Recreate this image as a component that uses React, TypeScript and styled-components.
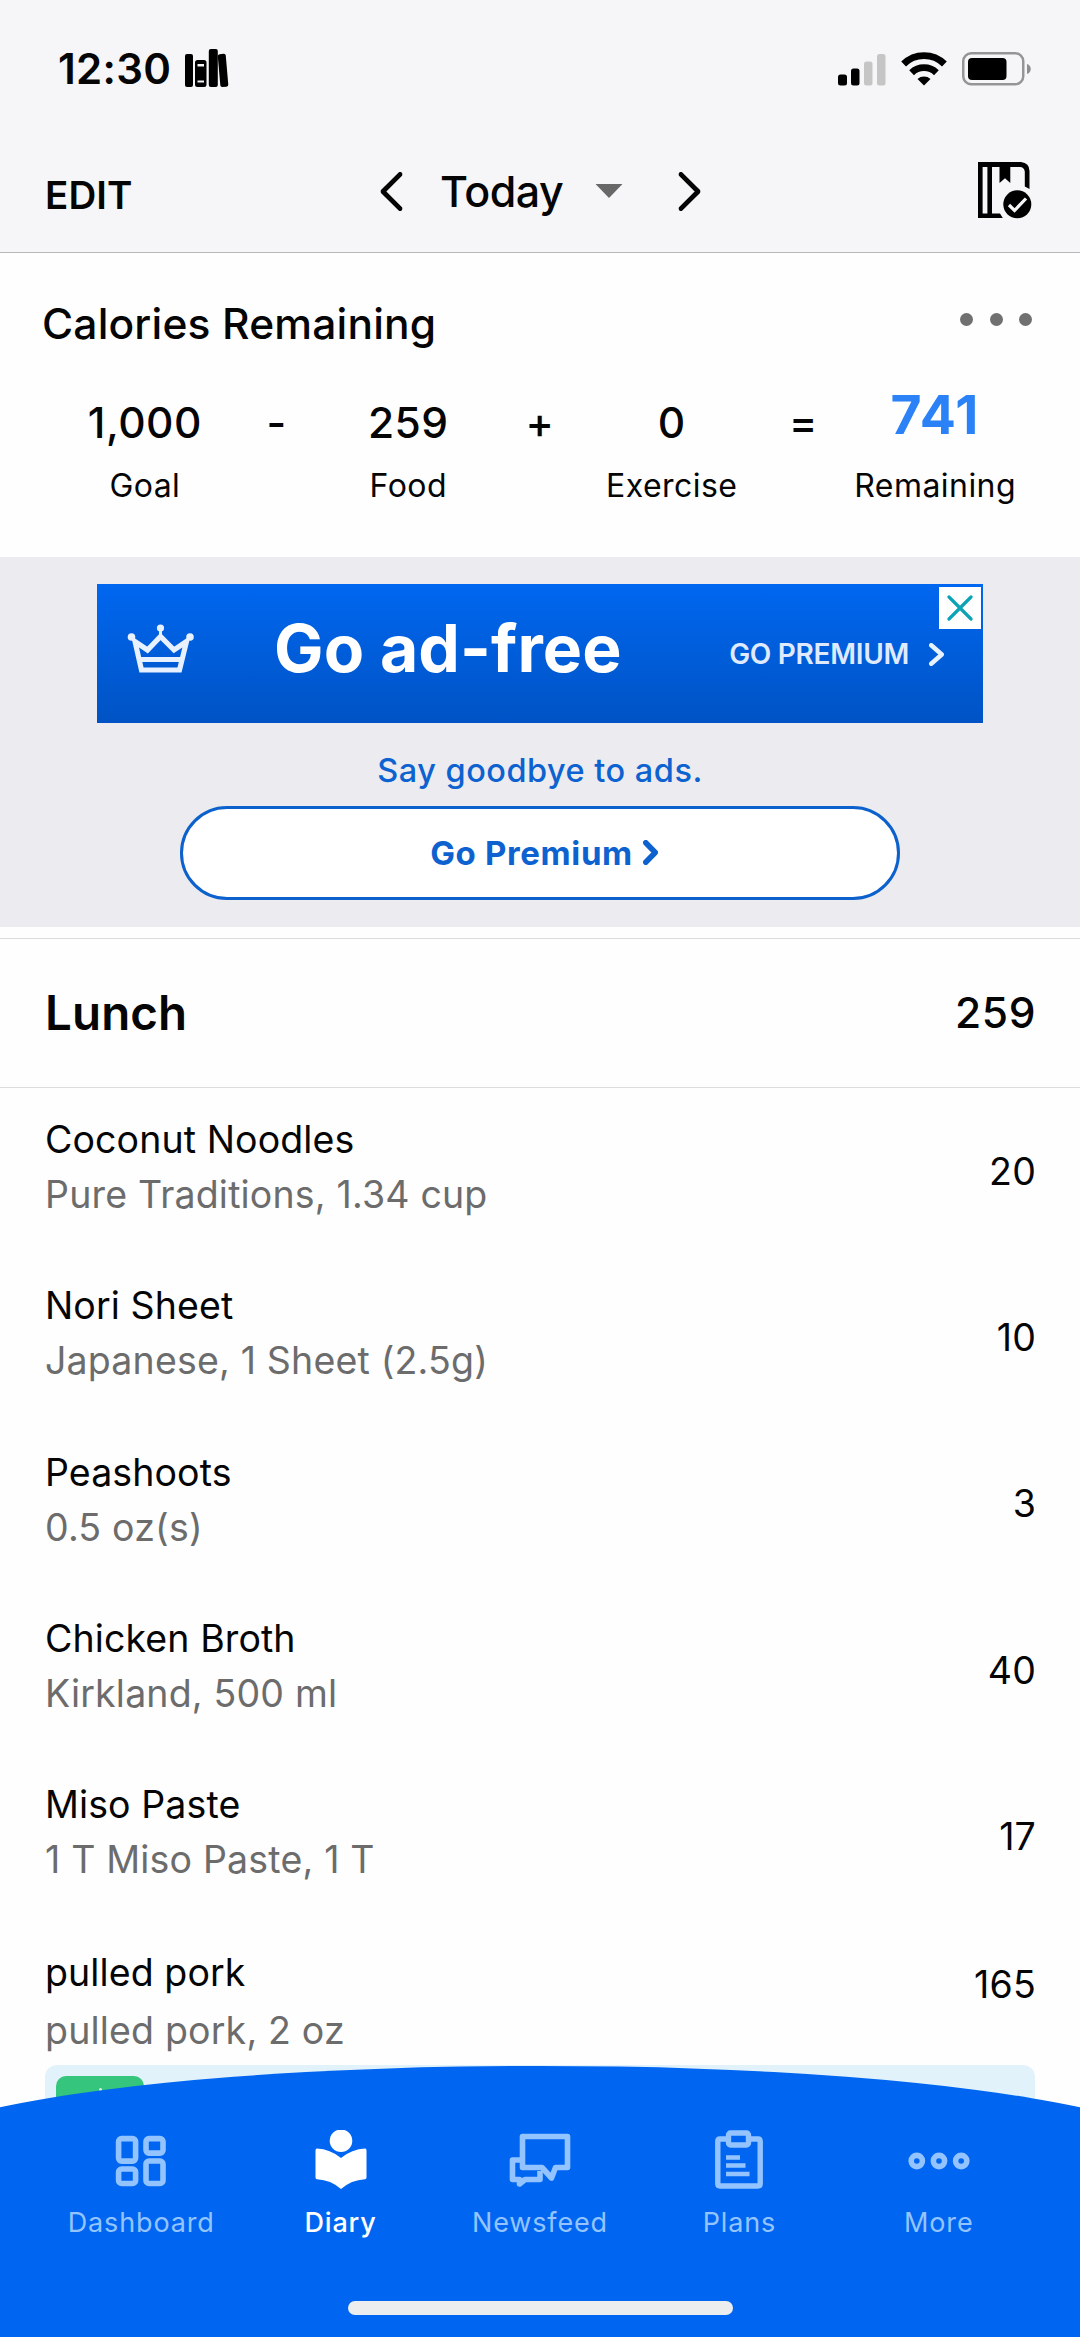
import React from "react";
import styled, { createGlobalStyle } from "styled-components";

const GlobalStyle = createGlobalStyle`
  * { box-sizing: border-box; }
  body {
    margin: 0;
    background: #fefefe;
    font-family: Inter, "Liberation Sans", sans-serif;
    color: #050505;
    -webkit-font-smoothing: antialiased;
  }
`;

type TextProps = { $size: number; $weight?: number; $track?: number; $color?: string };

const Text = styled.span<TextProps>`
  display: block;
  white-space: nowrap;
  font-size: ${(p) => p.$size}px;
  font-weight: ${(p) => p.$weight ?? 400};
  letter-spacing: ${(p) => p.$track ?? 0}px;
  color: ${(p) => p.$color ?? "inherit"};
  line-height: 1.2;
`;

const Screen = styled.main`
  position: relative;
  width: 1080px;
  height: 2337px;
  overflow: hidden;
  background: #fefefe;
`;

const Header = styled.header`
  height: 253px;
  background: #f6f6f8;
  border-bottom: 1px solid #b8b8bb;
`;

const StatusBar = styled.div`
  height: 138px;
  padding: 0 48px 0 58px;
  display: flex;
  align-items: center;
  justify-content: space-between;
`;

const StatusGroup = styled.div<{ $gap: number }>`
  display: flex;
  align-items: center;
  gap: ${(p) => p.$gap}px;
`;

const Toolbar = styled.div`
  height: 114px;
  padding: 0 48px 8px 45px;
  display: grid;
  grid-template-columns: 1fr auto 1fr;
  align-items: center;
`;

const EditButton = styled.div`
  padding-top: 8px;
`;

const DatePicker = styled.div`
  display: flex;
  align-items: center;
  width: 320px;
  transform: translateX(1.5px);
`;

const DateLabel = styled.div`
  margin: 2px 32px 0 38px;
`;

const Caret = styled.svg`
  margin-right: auto;
`;

const ToolbarEnd = styled.div`
  display: flex;
  justify-content: flex-end;
  padding-bottom: 2px;
`;

const Summary = styled.section`
  height: 304px;
  padding-top: 45px;
`;

const SummaryTitle = styled.div`
  height: 50px;
  padding: 0 48px 0 42px;
  display: flex;
  align-items: center;
  justify-content: space-between;
`;

const Dots = styled.div`
  display: flex;
  gap: 16.5px;
  padding-bottom: 8px;
`;

const Dot = styled.i`
  width: 13px;
  height: 13px;
  border-radius: 50%;
  background: #707070;
`;

const Equation = styled.div`
  margin-top: 38px;
  padding: 0 79px;
  display: grid;
  grid-template-columns: repeat(7, minmax(0, 1fr));
`;

const Term = styled.div`
  display: flex;
  flex-direction: column;
  align-items: center;
`;

const TermValue = styled.div<{ $lift?: number }>`
  height: 72px;
  display: flex;
  align-items: center;
  padding-bottom: ${(p) => p.$lift ?? 0}px;
`;

const TermLabel = styled.div`
  height: 56px;
  display: flex;
  align-items: center;
`;

const AdPanel = styled.section`
  height: 370px;
  padding-top: 27px;
  background: #ebebf0;
  display: flex;
  flex-direction: column;
  align-items: center;
`;

const Banner = styled.div`
  position: relative;
  width: 886px;
  height: 139px;
  padding: 0 39px 0 30px;
  display: flex;
  align-items: center;
  background: linear-gradient(#0067f0, #0053c4);
`;

const BannerIcon = styled.div`
  display: flex;
  padding-bottom: 9px;
`;

const BannerTitle = styled.div`
  margin: 0 auto 9px 79px;
`;

const BannerAction = styled.div`
  display: flex;
  align-items: center;
  gap: 20px;
  padding-top: 3px;
`;

const CloseBadge = styled.div`
  position: absolute;
  top: 3px;
  right: 2px;
  width: 42px;
  height: 42px;
  display: flex;
  align-items: center;
  justify-content: center;
  background: #fff;
`;

const AdNote = styled.div`
  height: 83px;
  padding-top: 11px;
  display: flex;
  align-items: center;
`;

const PremiumButton = styled.div`
  width: 720px;
  height: 94px;
  display: flex;
  align-items: center;
  justify-content: center;
  gap: 10px;
  padding: 1px 0 0 8px;
  border: 3px solid #0d61cc;
  border-radius: 47px;
  background: #fff;
`;

const MealHeader = styled.div`
  margin-top: 11px;
  height: 150px;
  padding: 0 44px 2px 45px;
  display: flex;
  align-items: center;
  justify-content: space-between;
  border-top: 1px solid #dcdcdc;
  border-bottom: 1px solid #dcdcdc;
`;

const FoodRow = styled.div<{ $height?: number }>`
  height: ${(p) => p.$height ?? 166.3}px;
  padding: 0 44px 0 45px;
  display: flex;
  align-items: center;
  justify-content: space-between;
`;

const FoodText = styled.div<{ $gap: number; $drop: number; $lift: number }>`
  display: flex;
  flex-direction: column;
  gap: ${(p) => p.$gap}px;
  padding-top: ${(p) => p.$drop}px;
  padding-bottom: ${(p) => p.$lift}px;
`;

const Insight = styled.div`
  margin: 15px 45px 0;
  height: 120px;
  padding: 11px;
  border-radius: 12px;
  background: #e2f2fb;
`;

const InsightBadge = styled.div`
  width: 88px;
  height: 60px;
  padding: 12px 0 0 43px;
  border-radius: 10px;
  background: #35c57d;
`;

const InsightMark = styled.i`
  display: block;
  width: 3px;
  height: 3px;
  border-radius: 50%;
  background: #d8f5e6;
`;

const TabBar = styled.nav`
  position: absolute;
  left: 0;
  right: 0;
  bottom: 0;
  height: 272px;
`;

const TabCurve = styled.svg`
  position: absolute;
  inset: 0;
`;

const Tabs = styled.div`
  position: relative;
  height: 272px;
  padding: 65px 41.5px 0;
  display: grid;
  grid-template-columns: repeat(5, minmax(0, 1fr));
`;

const Tab = styled.div<{ $active?: boolean }>`
  height: 116px;
  display: flex;
  flex-direction: column;
  align-items: center;
  gap: 17px;
  color: ${(p) => (p.$active ? "#ffffff" : "#93c4ff")};
`;

const HomeIndicator = styled.div`
  position: absolute;
  left: 348px;
  bottom: 22px;
  width: 385px;
  height: 14px;
  border-radius: 7px;
  background: #ebedef;
`;

const Chevron = ({ w, h, stroke, flip }: { w: number; h: number; stroke: number; flip?: boolean }) => {
  const m = stroke / 2;
  const d = flip ? `M${w - m} ${m}L${m} ${h / 2}L${w - m} ${h - m}` : `M${m} ${m}L${w - m} ${h / 2}L${m} ${h - m}`;
  return (
    <svg width={w} height={h} viewBox={`0 0 ${w} ${h}`} fill="none" stroke="currentColor" strokeWidth={stroke} strokeLinecap="round" strokeLinejoin="round">
      <path d={d} />
    </svg>
  );
};

const BooksIcon = () => (
  <svg width="44" height="39" viewBox="0 0 44 39">
    <rect x="0" y="5" width="8" height="33" rx="2" />
    <path fillRule="evenodd" d="M12.500 11h6.500a2.500 2.500 0 0 1 2.500 2.500v22a2.500 2.500 0 0 1-2.500 2.500h-6.500a2.500 2.500 0 0 1-2.500-2.500v-22a2.500 2.500 0 0 1 2.500-2.500zM12.500 15v2.500h6.500V15zM12.500 31.500v2h6.500v-2z" />
    <rect x="23.800" y="0" width="9" height="38" rx="2" />
    <rect x="34" y="5" width="8" height="33" rx="2" transform="rotate(-5 37 21)" />
  </svg>
);

const SignalIcon = () => (
  <svg width="48" height="33" viewBox="0 0 48 33">
    <rect x="0" y="21.500" width="9" height="11" rx="2.500" />
    <rect x="13" y="15.500" width="8.500" height="17" rx="2.500" />
    <rect x="26" y="8.500" width="8.500" height="24" rx="2.500" fill="#c5c5c6" />
    <rect x="39" y="1" width="8.500" height="31.500" rx="2.500" fill="#c5c5c6" />
  </svg>
);

const WifiIcon = () => (
  <svg width="46" height="34" viewBox="0 0 46 34">
    <g fill="none" stroke="#000" strokeWidth="6.800">
      <path d="M2.600 12a29 29 0 0 1 40.800 0" />
      <path d="M10.600 20.700a17.800 17.800 0 0 1 24.800 0" />
    </g>
    <path d="M16.500 27a9.800 9.800 0 0 1 13 0L23 33.500z" />
  </svg>
);

const BatteryIcon = () => (
  <svg width="70" height="34" viewBox="0 0 70 34">
    <rect x="1.250" y="1.250" width="60" height="31" rx="8" fill="none" stroke="#959597" strokeWidth="2.500" />
    <rect x="6" y="6" width="38.500" height="22" rx="4" />
    <path d="M65 12c5 1.500 5 8.500 0 10z" fill="#8e8e90" />
  </svg>
);

const DiaryCompleteIcon = () => (
  <svg width="54" height="57" viewBox="0 0 54 57">
    <path d="M0 0H43Q51.500 1 51.500 9V27L46.800 24.500V9.500Q46 5 42 5H32.300V21L27 16.300L21.500 21V5H14V51.500H22L24.800 56H0ZM4.600 5V51.500H9.400V5Z" fillRule="evenodd" />
    <circle cx="39.300" cy="42.300" r="14" />
    <path d="M31 43L36.500 48.500L48 36.500" fill="none" stroke="#f6f6f8" strokeWidth="3.200" />
  </svg>
);

const CrownIcon = () => (
  <svg width="68" height="50" viewBox="0 0 68 50" fill="none" stroke="#e8f1ff">
    <path d="M8 17.500L14.500 46H52.500L59.500 17.500L47 26L33.500 12.500L20.500 26Z" strokeWidth="5.200" strokeLinejoin="miter" />
    <path d="M12 35.500H55" strokeWidth="5" />
    <path d="M33.500 4V12" strokeWidth="3" />
    <g fill="#e8f1ff" stroke="none">
      <circle cx="33.500" cy="4" r="3.600" />
      <circle cx="4.500" cy="13" r="3.800" />
      <circle cx="63" cy="13" r="3.800" />
    </g>
  </svg>
);

const DashboardIcon = () => (
  <svg width="52" height="60" viewBox="0 0 52 60" fill="none" stroke="currentColor" strokeWidth="5.600">
    <rect x="3.600" y="8.600" width="17" height="22.500" rx="3" />
    <rect x="31" y="8.600" width="17" height="14.500" rx="3" />
    <rect x="3.600" y="39" width="17" height="14.500" rx="3" />
    <rect x="31" y="31" width="17" height="22.500" rx="3" />
  </svg>
);

const DiaryIcon = () => (
  <svg width="52" height="60" viewBox="0 0 52 60" fill="currentColor">
    <circle cx="26" cy="10.800" r="11.300" />
    <path d="M2 18.500Q15 19 26 28Q37 19 50 18.500Q51.500 18.500 51.500 20.500V47.500Q51.500 49 50 49.200Q36 50 26 59Q16 50 2 49.200Q.5 49 .5 47.500V20.500Q.5 18.500 2 18.500Z" />
  </svg>
);

const NewsfeedIcon = () => (
  <svg width="62" height="60" viewBox="0 0 62 60" fill="none" stroke="currentColor" strokeWidth="5.600" strokeLinejoin="round">
    <path d="M13.500 6.500H58.500V37.500H46.500L42.500 48L33 37.500H13.500Z" />
    <path d="M12 30H3.500V49.500H10.500V54L16 49.500H31V41" />
  </svg>
);

const PlansIcon = () => (
  <svg width="50" height="60" viewBox="0 0 50 60" fill="none" stroke="currentColor" strokeWidth="5.400">
    <path d="M12 9H6Q3.800 9 3.800 11.500V53.500Q3.800 56 6 56H44Q46.200 56 46.200 53.500V11.500Q46.200 9 44 9H37" />
    <rect x="14.500" y="3" width="20" height="12" rx="2" />
    <path d="M12 27.500H26M12 35.500H31.500M12 44H35.500" strokeWidth="4.400" />
  </svg>
);

const MoreIcon = () => (
  <svg width="62" height="60" viewBox="0 0 62 60" fill="none" stroke="currentColor" strokeWidth="5.600">
    <circle cx="8.800" cy="31" r="5.600" />
    <circle cx="31" cy="31" r="5.600" />
    <circle cx="53.200" cy="31" r="5.600" />
  </svg>
);

const foods = [
  { name: "Coconut Noodles", detail: "Pure Traditions, 1.34 cup", kcal: "20" },
  { name: "Nori Sheet", detail: "Japanese, 1 Sheet (2.5g)", kcal: "10" },
  { name: "Peashoots", detail: "0.5 oz(s)", kcal: "3" },
  { name: "Chicken Broth", detail: "Kirkland, 500 ml", kcal: "40" },
  { name: "Miso Paste", detail: "1 T Miso Paste, 1 T", kcal: "17" },
  { name: "pulled pork", detail: "pulled pork, 2 oz", kcal: "165", height: 131, gap: 13, drop: 34, lift: 0 },
];

const terms = [
  { value: "1,000", label: "Goal" },
  { value: "-" },
  { value: "259", label: "Food" },
  { value: "+" },
  { value: "0", label: "Exercise" },
  { value: "=" },
  { value: "741", label: "Remaining", highlight: true },
];

const tabs = [
  { label: "Dashboard", icon: <DashboardIcon /> },
  { label: "Diary", icon: <DiaryIcon />, active: true },
  { label: "Newsfeed", icon: <NewsfeedIcon /> },
  { label: "Plans", icon: <PlansIcon /> },
  { label: "More", icon: <MoreIcon /> },
];

export default function App() {
  return (
    <Screen>
      <GlobalStyle />
      <Header>
        <StatusBar>
          <StatusGroup $gap={14}>
            <Text $size={42} $weight={600} $track={0.3}>12:30</Text>
            <BooksIcon />
          </StatusGroup>
          <StatusGroup $gap={15}>
            <SignalIcon />
            <WifiIcon />
            <BatteryIcon />
          </StatusGroup>
        </StatusBar>
        <Toolbar>
          <EditButton>
            <Text $size={38.5} $weight={600} $track={0.1}>EDIT</Text>
          </EditButton>
          <DatePicker>
            <Chevron w={22} h={39} stroke={4.8} flip />
            <DateLabel><Text $size={43} $weight={500} $track={-0.5}>Today</Text></DateLabel>
            <Caret width="27" height="14" viewBox="0 0 27 14"><path d="M0 0H27L13.500 14Z" fill="#686868" /></Caret>
            <Chevron w={22} h={39} stroke={4.8} />
          </DatePicker>
          <ToolbarEnd><DiaryCompleteIcon /></ToolbarEnd>
        </Toolbar>
      </Header>

      <Summary>
        <SummaryTitle>
          <Text $size={42.5} $weight={500} $track={0.17}>Calories Remaining</Text>
          <Dots><Dot /><Dot /><Dot /></Dots>
        </SummaryTitle>
        <Equation>
          {terms.map((t) => (
            <Term key={t.value}>
              <TermValue $lift={t.highlight ? 13 : 0}>
                {t.highlight
                  ? <Text $size={53.5} $weight={700} $track={1.4} $color="#2a82f6">{t.value}</Text>
                  : <Text $size={42.5} $weight={500} $track={0.5}>{t.value}</Text>}
              </TermValue>
              <TermLabel>{t.label && <Text $size={32} $track={0.45}>{t.label}</Text>}</TermLabel>
            </Term>
          ))}
        </Equation>
      </Summary>

      <AdPanel>
        <Banner>
          <BannerIcon><CrownIcon /></BannerIcon>
          <BannerTitle><Text $size={66} $weight={700} $track={0.1} $color="#fff">Go ad-free</Text></BannerTitle>
          <BannerAction>
            <Text $size={28} $weight={600} $track={-0.3} $color="#dfeaff">GO PREMIUM</Text>
            <Text as="div" $size={10} $color="#e8f1ff"><Chevron w={15} h={23} stroke={4.5} /></Text>
          </BannerAction>
          <CloseBadge>
            <svg width="26" height="26" viewBox="0 0 26 26" stroke="#0ca3b6" strokeWidth="3.200" strokeLinecap="round"><path d="M2 2L24 24M24 2L2 24" /></svg>
          </CloseBadge>
        </Banner>
        <AdNote><Text $size={32.5} $weight={500} $track={0.5} $color="#0d62d0">Say goodbye to ads.</Text></AdNote>
        <PremiumButton>
          <Text $size={33} $weight={700} $track={0.65} $color="#0d62d0">Go Premium</Text>
          <Text as="div" $size={10} $color="#0d62d0"><Chevron w={15} h={25} stroke={5.5} /></Text>
        </PremiumButton>
      </AdPanel>

      <MealHeader>
        <Text $size={47.5} $weight={600} $track={0.1}>Lunch</Text>
        <Text $size={42.5} $weight={500} $track={0.6}>259</Text>
      </MealHeader>
      {foods.map((f) => (
        <FoodRow key={f.name} $height={f.height}>
          <FoodText $gap={f.gap ?? 10} $drop={f.drop ?? 0} $lift={f.lift ?? 8}>
            <Text $size={37.5} $track={0.1}>{f.name}</Text>
            <Text $size={37.5} $track={0.18} $color="#6c6c6c">{f.detail}</Text>
          </FoodText>
          <Text $size={37.5} $track={0.2}>{f.kcal}</Text>
        </FoodRow>
      ))}
      <Insight><InsightBadge><InsightMark /></InsightBadge></Insight>

      <TabBar>
        <TabCurve width="1080" height="272" viewBox="0 0 1080 272">
          <path d="M0 42.200A648 92.400 0 0 1 1080 42.200V272H0Z" fill="#0066f2" />
        </TabCurve>
        <Tabs>
          {tabs.map((t) => (
            <Tab key={t.label} $active={t.active}>
              {t.icon}
              <Text $size={27} $weight={t.active ? 500 : 400} $track={0.85}>{t.label}</Text>
            </Tab>
          ))}
        </Tabs>
        <HomeIndicator />
      </TabBar>
    </Screen>
  );
}
